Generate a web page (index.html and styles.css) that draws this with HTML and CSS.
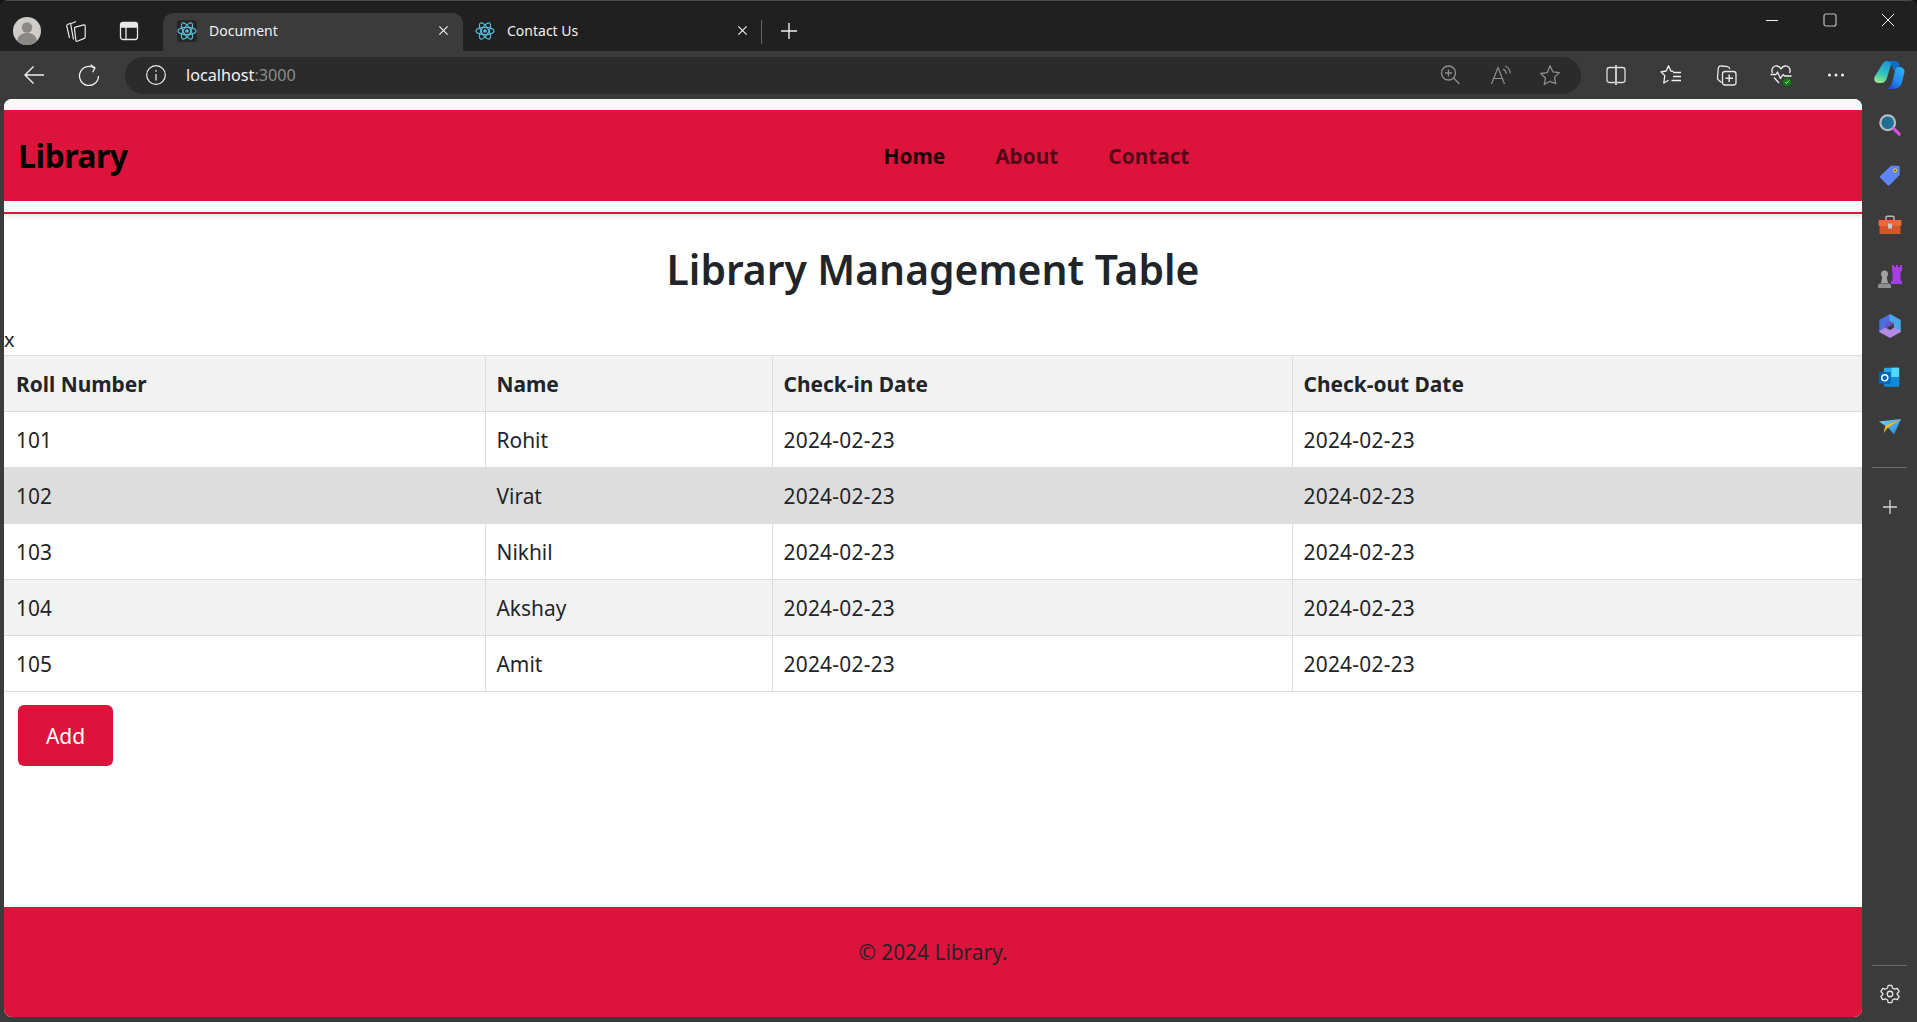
FILE: index.html
```html
<!DOCTYPE html>
<html lang="en">
<head>
<meta charset="utf-8">
<title>Document</title>
<link rel="stylesheet" href="styles.css">
</head>
<body>
<svg class="defs" width="0" height="0" aria-hidden="true">
  <defs>
    <symbol id="react" viewBox="0 0 24 24">
      <g fill="none" stroke="#55bcd9" stroke-width="1.4">
        <ellipse cx="12" cy="12" rx="11" ry="4.4"/>
        <ellipse cx="12" cy="12" rx="11" ry="4.4" transform="rotate(60 12 12)"/>
        <ellipse cx="12" cy="12" rx="11" ry="4.4" transform="rotate(120 12 12)"/>
      </g>
      <circle cx="12" cy="12" r="2.2" fill="#55bcd9"/>
    </symbol>
    <linearGradient id="cpA" x1=".6" y1="0" x2=".3" y2="1">
      <stop offset="0" stop-color="#1e93d8"/><stop offset=".55" stop-color="#2ac4be"/><stop offset="1" stop-color="#9be58a"/>
    </linearGradient>
    <linearGradient id="cpB" x1=".8" y1="0" x2=".2" y2="1">
      <stop offset="0" stop-color="#2fb0f5"/><stop offset=".6" stop-color="#1f86ee"/><stop offset="1" stop-color="#1a4fd6"/>
    </linearGradient>
    <linearGradient id="sendG" x1="0" y1="0" x2="1" y2="1">
      <stop offset="0" stop-color="#7ed6fb"/><stop offset="1" stop-color="#1f7fe0"/>
    </linearGradient>
  </defs>
</svg>
<div class="window">
  <header class="titlebar">
    <div class="tb-btn">
      <svg class="avatar" viewBox="0 0 28 28"><circle cx="14" cy="14" r="14" fill="#cfcdc9"/><circle cx="14" cy="10.5" r="5.2" fill="#8b8985"/><path d="M4 24c1-6 5-8 10-8s9 2 10 8a14 14 0 0 1-20 0z" fill="#8b8985"/></svg>
    </div>
    <div class="tb-btn">
      <svg class="i22 coll-ic" viewBox="0 0 22 22" fill="none" stroke="#e8e8e8" stroke-width="1.2" stroke-linejoin="round"><path d="M6 3 2.500 4.500c-.6.300-.9.800-.7 1.500L4.500 18"/><path d="M11 1.500 6.500 3.500c-.6.300-.9.800-.7 1.400L8.500 19.500"/><path d="M9.500 8.500c-.1-.7.200-1.200.9-1.400l8.400-2.300c.8-.2 1.400.3 1.400 1.100v11.200c0 .7-.3 1.100-.9 1.300l-7 2.800c-.8.300-1.400-.1-1.500-.9z"/></svg>
    </div>
    <div class="tb-btn tb-last">
      <svg class="i22" viewBox="0 0 22 22" fill="none" stroke="#e8e8e8" stroke-width="1.3"><rect x="2.500" y="2.500" width="17" height="17" rx="2.500"/><path d="M3 3.500h16V7H3z" fill="#e8e8e8"/><path d="M8 7v12.500"/></svg>
    </div>
    <div class="tab tab-active">
      <span class="fav fav-dark"><svg class="i20"><use href="#react"/></svg></span>
      <span class="tab-title">Document</span>
      <svg class="tab-x" viewBox="0 0 12 12" stroke="#f0f0f0" stroke-width="1.3"><path d="M1.500 1.500l9 9M10.500 1.500l-9 9"/></svg>
    </div>
    <div class="tab tab-plain">
      <span class="fav"><svg class="i20"><use href="#react"/></svg></span>
      <span class="tab-title">Contact Us</span>
      <svg class="tab-x" viewBox="0 0 12 12" stroke="#f0f0f0" stroke-width="1.3"><path d="M1.500 1.500l9 9M10.500 1.500l-9 9"/></svg>
    </div>
    <span class="tab-sep"></span>
    <div class="newtab">
      <svg class="i18" viewBox="0 0 18 18" stroke="#eee" stroke-width="1.4"><path d="M9 1v16M1 9h16"/></svg>
    </div>
    <div class="winctl">
      <div class="win-btn"><svg class="i14" viewBox="0 0 14 14" stroke="#f2f2f2" stroke-width="1"><path d="M1 7.500h12"/></svg></div>
      <div class="win-btn"><svg class="i14" viewBox="0 0 14 14" fill="none" stroke="#bdbdbd" stroke-width="1.2"><rect x="1" y="1" width="12" height="12" rx="2"/></svg></div>
      <div class="win-btn"><svg class="i14" viewBox="0 0 14 14" stroke="#f2f2f2" stroke-width="1"><path d="M1 1l12 12M13 1 1 13"/></svg></div>
    </div>
  </header>

  <div class="toolbar">
    <div class="tool-btn"><svg class="i22" viewBox="0 0 22 22" fill="none" stroke="#f0f0f0" stroke-width="1.4"><path d="M21 11H2M10.500 2.500 2 11l8.500 8.500"/></svg></div>
    <div class="tool-btn"><svg class="i22" viewBox="0 0 22 22" fill="none" stroke="#f0f0f0" stroke-width="1.3"><path d="M20.500 12A9.500 9.500 0 1 1 16 3.900"/><path d="M12.500 .8 17 3.800l-2.300 4.400"/></svg></div>
    <div class="addr">
      <svg class="i22 addr-info" viewBox="0 0 22 22" fill="none" stroke="#f0f0f0" stroke-width="1.2"><circle cx="11" cy="11" r="9.300"/><path d="M11 10v6.500M11 6v1.800"/></svg>
      <span class="url">localhost<span class="url-dim">:3000</span></span>
      <div class="addr-icons">
        <svg class="i22 zoom-ic" viewBox="0 0 22 22" fill="none" stroke="#8e8e8e" stroke-width="1.3"><circle cx="9.500" cy="9" r="7"/><path d="M14.500 14l6 6M9.500 5.500v7M6 9h7"/></svg>
        <svg class="i22" viewBox="0 0 22 22" fill="none" stroke="#8e8e8e" stroke-width="1.2"><path d="M1.500 20 8 3.500 14.500 20M4 14.500h8"/><path d="M13 5c2 .8 3 2.500 3.200 5M15 2c3 1 5 4 5.200 7.500"/></svg>
        <svg class="i22" viewBox="0 0 22 22" fill="none" stroke="#8e8e8e" stroke-width="1.3" stroke-linejoin="round"><path d="M11 1.800l2.800 6 6.500.8-4.800 4.500 1.300 6.500L11 17.300l-5.800 3.200 1.300-6.500-4.800-4.500 6.500-.8z"/></svg>
      </div>
    </div>
    <div class="tool-right">
      <div class="tool-btn"><svg class="i22" viewBox="0 0 22 22" fill="none" stroke="#dcdcdc" stroke-width="1.3"><rect x="2" y="3.500" width="18" height="15" rx="2.500"/><path d="M11 1v20" stroke-width="2" stroke="#c8c8c8"/></svg></div>
      <div class="tool-btn"><svg class="i22" viewBox="0 0 22 22" fill="none" stroke="#f0f0f0" stroke-width="1.3" stroke-linejoin="round"><path d="M13.500 7.400 10.800 7 8.500 1.800 6.200 7l-5.200.8 3.800 3.800-1 7.400 4.700-2.800"/><path d="M13 8.500h8M13 12.500h8M11.500 16.500h9.500"/></svg></div>
      <div class="tool-btn"><svg class="i24" viewBox="0 0 24 24" fill="none" stroke="#e8e8e8" stroke-width="1.3" stroke-linejoin="round"><path d="M7.500 19.500 4.500 17c-.8-.7-1.100-1.400-1-2.300L4.300 5.500C4.500 3.700 5.700 2.800 7.500 3l6 .7c1.300.2 2 1 2.300 2.300"/><rect x="8.500" y="8.500" width="13.500" height="13.500" rx="2.500"/><path d="M15.200 11.500v7.500M11.500 15.200H19" stroke-width="1.5"/></svg></div>
      <div class="tool-btn"><svg class="i24" viewBox="0 0 24 24" fill="none" stroke="#f0f0f0" stroke-width="1.3" stroke-linejoin="round"><path d="M3.500 10C1.500 5.500 5 2.500 8 3c2 .3 3.200 1.500 4 2.800C12.800 4.500 14 3.300 16 3c3-.5 6.500 2.500 4.500 7"/><path d="M1.500 11.500h5.500l1.500-2.500 3 6.500 2.500-4 1.500 1.500h7"/><path d="M5 14.500l5 5.500"/><circle cx="18" cy="19" r="4.300" fill="#107c10" stroke="none"/><path d="M16 19l1.500 1.500 2.500-3" stroke="#a8e0a8" stroke-width="1"/></svg></div>
      <div class="tool-btn"><svg class="i18" viewBox="0 0 18 18" fill="#f0f0f0"><circle cx="2.500" cy="9" r="1.500"/><circle cx="9" cy="9" r="1.500"/><circle cx="15.500" cy="9" r="1.500"/></svg></div>
    </div>
    <div class="copilot-slot">
      <svg class="copilot" viewBox="0 0 31 28"><path d="M9 2C10 .7 11.500 0 13 0h7.500c-2.200 1-3.400 3-4.300 6L13 17c-.9 3-3 5-6 5H4C1 22-.5 19 .5 16z" fill="url(#cpA)"/><path d="M13.500 0h7c2 0 3.500.8 4.500 2.500L26 6c-2.500-.6-4 .8-4.700 3L20 10l-2-5c-1-2.500-2.500-4.500-4.500-5z" fill="#0f6fc4"/><path d="M24 6c3-.5 7 1 6.500 5L28 21c-1 4-4 7-8 7h-8c3-.5 5-3 6-6l3-12c.5-2 1-3.500 3-4z" fill="url(#cpB)"/></svg>
    </div>
  </div>

  <div class="content-row">
    <main class="page">
      <div class="nav-wrap">
        <nav class="nav">
          <span class="brand">Library</span>
          <div class="links">
            <a class="link link-on">Home</a>
            <a class="link">About</a>
            <a class="link">Contact</a>
          </div>
        </nav>
      </div>
      <h1 class="title">Library Management Table</h1>
      <div class="stray">x</div>
      <table class="grid">
        <colgroup>
          <col class="c1"><col class="c2"><col class="c3"><col class="c4">
        </colgroup>
        <thead>
          <tr><th>Roll Number</th><th>Name</th><th>Check-in Date</th><th>Check-out Date</th></tr>
        </thead>
        <tbody>
          <tr><td>101</td><td>Rohit</td><td>2024-02-23</td><td>2024-02-23</td></tr>
          <tr class="hover"><td>102</td><td>Virat</td><td>2024-02-23</td><td>2024-02-23</td></tr>
          <tr><td>103</td><td>Nikhil</td><td>2024-02-23</td><td>2024-02-23</td></tr>
          <tr class="even"><td>104</td><td>Akshay</td><td>2024-02-23</td><td>2024-02-23</td></tr>
          <tr><td>105</td><td>Amit</td><td>2024-02-23</td><td>2024-02-23</td></tr>
        </tbody>
      </table>
      <button class="add">Add</button>
      <footer class="foot">© 2024 Library.</footer>
    </main>

    <aside class="side">
      <div class="side-btn"><svg class="i24" viewBox="0 0 26 26" fill="none"><circle cx="10.500" cy="10.500" r="8" fill="#1f6f96" stroke="#b5bcc0" stroke-width="2.400"/><path d="M17 17l6 6" stroke="#d84fe0" stroke-width="3.500" stroke-linecap="round"/></svg></div>
      <div class="side-btn"><svg class="i24" viewBox="0 0 26 26"><path d="M14 3h8c1 0 1.500.6 1.500 1.500V13L12.500 24c-.6.600-1.400.600-2 0l-8-8c-.600-.6-.600-1.400 0-2z" fill="#5f84f5"/><circle cx="18.500" cy="8" r="2.200" fill="#f5c518"/><circle cx="18.500" cy="8" r=".9" fill="#333"/></svg></div>
      <div class="side-btn"><svg class="i26" viewBox="0 0 26 26"><path d="M9 7V4.500c0-.8.500-1.300 1.300-1.300h5.400c.8 0 1.300.5 1.300 1.300V7" fill="none" stroke="#b8b8b8" stroke-width="1.500"/><rect x="1.500" y="7" width="23" height="6" rx="1" fill="#e8693a"/><rect x="2.500" y="13" width="21" height="8" rx="1" fill="#d4552a"/><rect x="11" y="10.500" width="4" height="5" rx=".6" fill="#c9c9c9"/></svg></div>
      <div class="side-btn"><svg class="i26" viewBox="0 0 26 26"><path d="M15 2h2v2h2V2h2v2h2V2h2v6l-1.500 1v8l1.500 1.500V21H14v-2.500l1.500-1.500V9L15 8z" fill="#a63ee8"/><circle cx="7.500" cy="11" r="3.500" fill="#a3a3a3"/><path d="M5.500 13h4l1.500 7H4z" fill="#a3a3a3"/><path d="M1 25v-2c0-1.500 1-2.500 2-2.500h9c1 0 2 1 2 2.500v2z" fill="#8f8f8f"/></svg></div>
      <div class="side-btn"><svg class="i26" viewBox="0 0 26 26" stroke-linejoin="round" stroke-width="1.500"><path d="M3 7.500 13 2v6L8.500 10.500v5L3 18.500z" fill="#4c6ee0" stroke="#4c6ee0"/><path d="M13 2l10 5.500v11l-5.500-3v-5L13 8z" fill="#4aa8e8" stroke="#4aa8e8"/><path d="M3 18.500l5.500-3L13 18l4.500-2.500 5.500 3L13 24z" fill="#b38ae8" stroke="#b38ae8"/><path d="M8.500 15.500v-5L13 8l4.500 2.500-4.500 2.500z" fill="#6a52c8"/></svg></div>
      <div class="side-btn"><svg class="i22 outlook-ic" viewBox="0 0 26 26"><rect x="7" y="2" width="18" height="22" rx="1.500" fill="#28a8ea"/><path d="M7 13h18v10a1.500 1.500 0 0 1-1.500 1.500h-15A1.500 1.500 0 0 1 7 23z" fill="#0f8ad8"/><path d="M16 2h9v11h-9z" fill="#50d9ff"/><rect x="1" y="7" width="14" height="14" rx="1.500" fill="#0364b8"/><circle cx="8" cy="14" r="3.600" fill="none" stroke="#fff" stroke-width="1.700"/></svg></div>
      <div class="side-btn"><svg class="i26" viewBox="0 0 26 26"><path d="M2 7.500 24 5 17 20.500 11 13.500z" fill="url(#sendG)"/><path d="M24 5 8.500 11.500 6.500 19l4.500-5.500z" fill="#f7b81c"/></svg></div>
      <hr class="side-rule">
      <div class="side-btn"><svg class="i18" viewBox="0 0 18 18" stroke="#d8d8d8" stroke-width="1.3"><path d="M9 2v14M2 9h14"/></svg></div>
      <div class="side-bottom">
        <hr class="side-rule">
        <div class="side-btn"><svg class="i22" viewBox="0 0 24 24" fill="none" stroke="#e6e6e6" stroke-width="1.4" stroke-linejoin="round"><circle cx="12" cy="12" r="3"/><path d="M10 2.500h4l.7 3 2.300 1.300 3-.9 2 3.500-2.200 2.100v1l2.200 2.100-2 3.500-3-.9-2.300 1.300-.7 3h-4l-.7-3L7 17.200l-3 .9-2-3.500 2.200-2.100v-1L2 9.400l2-3.500 3 .9 2.300-1.300z"/></svg></div>
      </div>
    </aside>
  </div>
</div>
</body>
</html>
```

FILE: styles.css
```css
* { box-sizing: border-box; }
html, body { margin: 0; padding: 0; height: 100%; overflow: hidden; background: #141414; }
body { font-family: "Noto Sans", "Open Sans", sans-serif; color: #212529; }
.defs { display: block; height: 0; }
svg { display: block; flex: none; }
.i14 { width: 14px; height: 14px; }
.i18 { width: 18px; height: 18px; }
.i20 { width: 20px; height: 20px; }
.i22 { width: 22px; height: 22px; }
.i24 { width: 24px; height: 24px; }
.i26 { width: 26px; height: 26px; }
.avatar { width: 28px; height: 28px; }
.copilot { width: 31px; height: 28px; }
.coll-ic { margin-right: 3px; }
.outlook-ic { margin-right: 1px; }

.window { height: 1022px; display: flex; flex-direction: column; background: #3b3b3b; border-radius: 8px 8px 0 0; overflow: hidden; }

.titlebar { height: 51px; flex: none; display: flex; align-items: flex-end; background: #202020; padding-left: 1px; border-top: 1px solid #4a4a4a; }
.tb-btn { width: 51px; height: 38px; padding-bottom: 2px; display: flex; align-items: center; justify-content: center; }
.tb-last { margin-right: 9px; }
.tab { height: 38px; padding-bottom: 3px; display: flex; align-items: center; color: #f0f0f0; font-size: 14px; }
.tab-active { width: 300px; background: #3b3b3b; border-radius: 10px 10px 0 0; padding-left: 14px; padding-right: 14px; }
.tab-plain { width: 298px; padding-left: 12px; padding-right: 13px; }
.fav { width: 20px; height: 22px; display: flex; align-items: center; justify-content: center; }
.fav-dark { background: #262626; border-radius: 3px; }
.tab-title { flex: 1; margin-left: 12px; }
.tab-x { width: 11px; height: 11px; }
.tab-sep { width: 1px; height: 24px; background: #666; margin-bottom: 7px; }
.newtab { width: 54px; height: 38px; padding-bottom: 2px; display: flex; align-items: center; justify-content: center; }
.winctl { margin-left: auto; align-self: flex-start; display: flex; }
.win-btn { width: 58px; height: 38px; display: flex; align-items: center; justify-content: center; }

.toolbar { height: 48px; flex: none; display: flex; align-items: center; padding-left: 6px; background: #3b3b3b; }
.tool-btn { width: 55px; height: 37px; display: flex; align-items: center; justify-content: center; }
.addr { width: 1456px; height: 37px; margin-left: 9px; display: flex; align-items: center; background: #2b2b2b; border-radius: 19px; padding: 0 20px; }
.addr-info { margin-right: 19px; }
.url { color: #f4f4f4; font-size: 16.2px; }
.url-dim { color: #8c8c8c; }
.addr-icons { margin-left: auto; display: flex; gap: 27px; }
.zoom-ic { margin-right: 2px; }
.tool-right { display: flex; margin-left: 7px; }
.copilot-slot { width: 55px; display: flex; justify-content: center; margin-left: -1px; }

.content-row { flex: 1; min-height: 0; display: flex; padding: 0 0 5px 4px; }
.page { flex: 1; min-width: 0; display: flex; flex-direction: column; background: #fff; border-radius: 8px; overflow: hidden; }

.nav-wrap { flex: none; height: 115px; padding: 11px 0; background: #f8f9fa; border-bottom: 2px solid #dc143c; box-shadow: 0 2px 5px rgba(0,0,0,.12); }
.nav { height: 91px; display: flex; align-items: center; background: #dc143c; padding-left: 14px; }
.brand { color: #000; font-size: 32px; font-weight: 700; letter-spacing: -.5px; }
.links { display: flex; gap: 50px; margin-left: 756px; }
.link { font-size: 20.8px; font-weight: 700; color: rgba(0,0,0,.65); }
.link-on { color: rgba(0,0,0,.9); }

.title { margin: 25px 0 0; text-align: center; font-size: 40.8px; line-height: 60px; font-weight: 600; color: #212529; }
.stray { margin-top: 27px; font-size: 20px; line-height: 27px; height: 29px; color: #212529; }

.grid { width: 100%; flex: none; table-layout: fixed; border-collapse: collapse; font-size: 20.9px; }
.c1 { width: 481px; }
.c2 { width: 287px; }
.c3 { width: 520px; }
.grid th, .grid td { height: 56px; padding: 0 11px; text-align: left; border: 1px solid #ddd; }
.grid th:first-child, .grid td:first-child { border-left: 0; padding-left: 12px; }
.grid th:last-child, .grid td:last-child { border-right: 0; }
.grid th { background: #f2f2f2; font-weight: 700; }
.grid td:nth-child(n+3) { letter-spacing: .25px; }
.hover td { background: #ddd; }
.even td { background: #f2f2f2; }

.add { align-self: flex-start; flex: none; margin: 13px 0 0 14px; width: 95px; height: 61px; background: #dc143c; color: #fff; border: 0; border-radius: 6px; font: 400 21px "Noto Sans", sans-serif; }

.foot { margin-top: auto; height: 110px; padding-bottom: 20px; flex: none; display: flex; align-items: center; justify-content: center; background: #dc143c; font-size: 20.9px; color: #212529; }

.side { width: 55px; flex: none; display: flex; flex-direction: column; align-items: center; padding-top: 1px; margin-bottom: -2px; }
.side-btn { width: 55px; height: 50.3px; display: flex; align-items: center; justify-content: center; flex: none; }
.side-rule { width: 35px; height: 1px; border: 0; margin: 15px 0 14px; background: #6a6a6a; flex: none; }
.side-bottom { margin-top: auto; display: flex; flex-direction: column; align-items: center; }
.side-bottom .side-rule { margin: 0 0 3px; }
```
